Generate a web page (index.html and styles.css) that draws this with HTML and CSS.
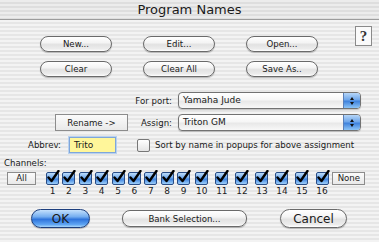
FILE: index.html
```html
<!DOCTYPE html>
<html>
<head>
    <title>Program Names</title>
    <meta name="viewport" content="width=device-width, initial-scale=1" />
    <link rel="stylesheet" href="styles.css">
</head>
<body>
    <div class="window">
        <div class="titlebar">Program Names</div>

        <div class="top">
            <div class="button-grid">
                <button class="push">New...</button>
                <button class="push">Edit...</button>
                <button class="push">Open...</button>
                <button class="push">Clear</button>
                <button class="push">Clear All</button>
                <button class="push">Save As..</button>
            </div>
            <div class="help">?</div>
        </div>

        <div class="assign">
            <div class="label-cell">For port:</div>
            <div class="popup">
                <span class="popup-text">Yamaha Jude</span>
                <span class="popup-arrows"><i class="up"></i><i class="down"></i></span>
            </div>
            <div class="label-cell">
                <button class="bevel rename">Rename -&gt;</button>
                <span class="assign-label">Assign:</span>
            </div>
            <div class="popup">
                <span class="popup-text">Triton GM</span>
                <span class="popup-arrows"><i class="up"></i><i class="down"></i></span>
            </div>
        </div>

        <div class="abbrev-row">
            <label class="abbrev-label" for="abbrev">Abbrev:</label>
            <div class="field" id="abbrev">Trito</div>
            <span class="check-empty"></span>
            <span class="sort-label">Sort by name in popups for above assignment</span>
        </div>

        <div class="channels-label">Channels:</div>
        <div class="channels">
            <button class="bevel small all">All</button>
            <div class="boxes" id="boxes"></div>
            <button class="bevel small none">None</button>
        </div>

        <div class="bottom">
            <button class="push big default">OK</button>
            <button class="push bank">Bank Selection...</button>
            <button class="push big cancel">Cancel</button>
        </div>
    </div>

    <script>
        const boxes = document.getElementById('boxes');
        for (let i = 1; i <= 16; i++) {
            const cell = document.createElement('div');
            cell.className = 'channel';
            cell.innerHTML = `
                <span class="checkbox">
                    <svg viewBox="0 0 14 14" width="14" height="14">
                        <path d="M2.5 7.5 L5.5 11 L12.5 1" fill="none" stroke="#000" stroke-width="2.4" stroke-linecap="round" stroke-linejoin="round"/>
                    </svg>
                </span>
                <span class="num">${i}</span>
            `;
            boxes.appendChild(cell);
        }
    </script>
</body>
</html>
```

FILE: styles.css
```css
* {
    box-sizing: border-box;
}

body {
    margin: 0;
    font-family: "DejaVu Sans", Verdana, sans-serif;
    font-size: 8.6px;
    color: #1a1a1a;
}

.window {
    width: 379px;
    height: 242px;
    overflow: hidden;
    background: repeating-linear-gradient(#f3f3f3 0, #f3f3f3 2px, #e6e6e6 2px, #e6e6e6 4px);
}

.titlebar {
    height: 20px;
    line-height: 20px;
    text-align: center;
    font-size: 13px;
    border-bottom: 1px solid #9c9c9c;
    background: repeating-linear-gradient(#ececec 0, #ececec 2px, #dedede 2px, #dedede 4px);
}

button {
    font-family: inherit;
    font-size: 8.6px;
    color: #1a1a1a;
    padding: 0;
    margin: 0;
}

.push {
    height: 16px;
    border: 1px solid #6a6a6a;
    border-radius: 8px;
    background: linear-gradient(#ffffff, #f4f4f4 40%, #e2e2e2 55%, #ececec 85%, #ffffff);
    box-shadow: 0 1px 1px rgba(0, 0, 0, 0.25);
}

.top {
    display: flex;
    padding: 6px 7px 0 40px;
}

.button-grid {
    display: grid;
    grid-template-columns: 72px 72px 72px;
    column-gap: 31px;
    row-gap: 9px;
    margin-top: 10px;
}

.help {
    margin-left: auto;
    width: 17px;
    height: 20px;
    border: 1px solid #8a8a8a;
    background: #fafafa;
    text-align: center;
    font-family: "Liberation Serif", serif;
    font-weight: bold;
    font-size: 15px;
    line-height: 19px;
    color: #333;
}

.assign {
    display: grid;
    grid-template-columns: 172px 183px;
    column-gap: 6px;
    row-gap: 5px;
    margin-top: 15px;
}

.label-cell {
    display: flex;
    align-items: center;
    justify-content: flex-end;
}

.popup {
    display: flex;
    height: 17px;
    border: 1px solid #727272;
    border-radius: 4px;
    background: linear-gradient(#ffffff, #f6f6f6 45%, #e8e8e8 55%, #f8f8f8);
    box-shadow: 0 1px 1px rgba(0, 0, 0, 0.2);
    overflow: hidden;
}

.popup-text {
    flex: 1;
    padding-left: 4px;
    line-height: 15px;
    font-size: 9px;
}

.popup-arrows {
    width: 17px;
    display: flex;
    flex-direction: column;
    align-items: center;
    justify-content: center;
    gap: 2px;
    border-left: 1px solid #5a7fb8;
    background: linear-gradient(#b6d6f8, #6ea6ea 45%, #3f82dc 55%, #8cc4f7);
}

.popup-arrows i {
    width: 0;
    height: 0;
    border-left: 2.5px solid transparent;
    border-right: 2.5px solid transparent;
}

.popup-arrows .up {
    border-bottom: 3px solid #111;
}

.popup-arrows .down {
    border-top: 3px solid #111;
}

.bevel {
    border: 1px solid #8c8c8c;
    background: linear-gradient(#fbfbfb, #e9e9e9);
}

.rename {
    width: 73px;
    height: 17px;
    margin-right: 13px;
}

.abbrev-row {
    display: flex;
    align-items: center;
    margin-top: 6px;
    padding-left: 28px;
}

.field {
    width: 47px;
    height: 16px;
    margin-left: 8px;
    padding-left: 4px;
    line-height: 14px;
    font-size: 9px;
    background: #fff69a;
    border: 1px solid #7fa6da;
    box-shadow: 0 0 0 1px #b9d2f0;
}

.check-empty {
    width: 13px;
    height: 13px;
    margin-left: 21px;
    border: 1px solid #777;
    border-radius: 2px;
    background: linear-gradient(#ffffff, #e4e4e4);
}

.sort-label {
    margin-left: 5px;
}

.channels-label {
    margin-top: 5px;
    padding-left: 4px;
    height: 11px;
    line-height: 11px;
}

.channels {
    display: flex;
    align-items: flex-start;
    margin-top: 2px;
    padding-left: 7px;
}

.small {
    height: 13px;
    line-height: 11px;
}

.all {
    width: 29px;
    margin-top: 1px;
}

.boxes {
    display: flex;
    gap: 3.4px;
    margin-left: 10px;
}

.channel {
    display: flex;
    flex-direction: column;
    align-items: center;
}

.checkbox {
    position: relative;
    width: 13px;
    height: 13px;
    margin-top: 1px;
    border: 1px solid #284c86;
    border-radius: 2px;
    background: linear-gradient(#bcdcfb, #6ea8ec 45%, #3d82df 55%, #9fd0fa);
}

.checkbox svg {
    position: absolute;
    left: -1px;
    top: -3px;
}

.num {
    padding: 0 2.6px;
    margin-top: 1px;
    line-height: 11px;
    font-size: 9px;
}

.none {
    width: 33px;
    margin-left: 2px;
    margin-top: 1px;
}

.bottom {
    display: flex;
    align-items: center;
    margin-top: 12px;
    padding-left: 31px;
}

.big {
    height: 19px;
    border-radius: 10px;
    font-size: 12px;
}

.default {
    width: 59px;
    border-color: #1d3f7e;
    background: linear-gradient(#c4e0fc, #74adf0 40%, #2f74db 55%, #5ea4f2 85%, #a8d6fb);
}

.bank {
    width: 125px;
    height: 17px;
    margin-left: 32px;
}

.cancel {
    width: 67px;
    margin-left: 33px;
}
```
